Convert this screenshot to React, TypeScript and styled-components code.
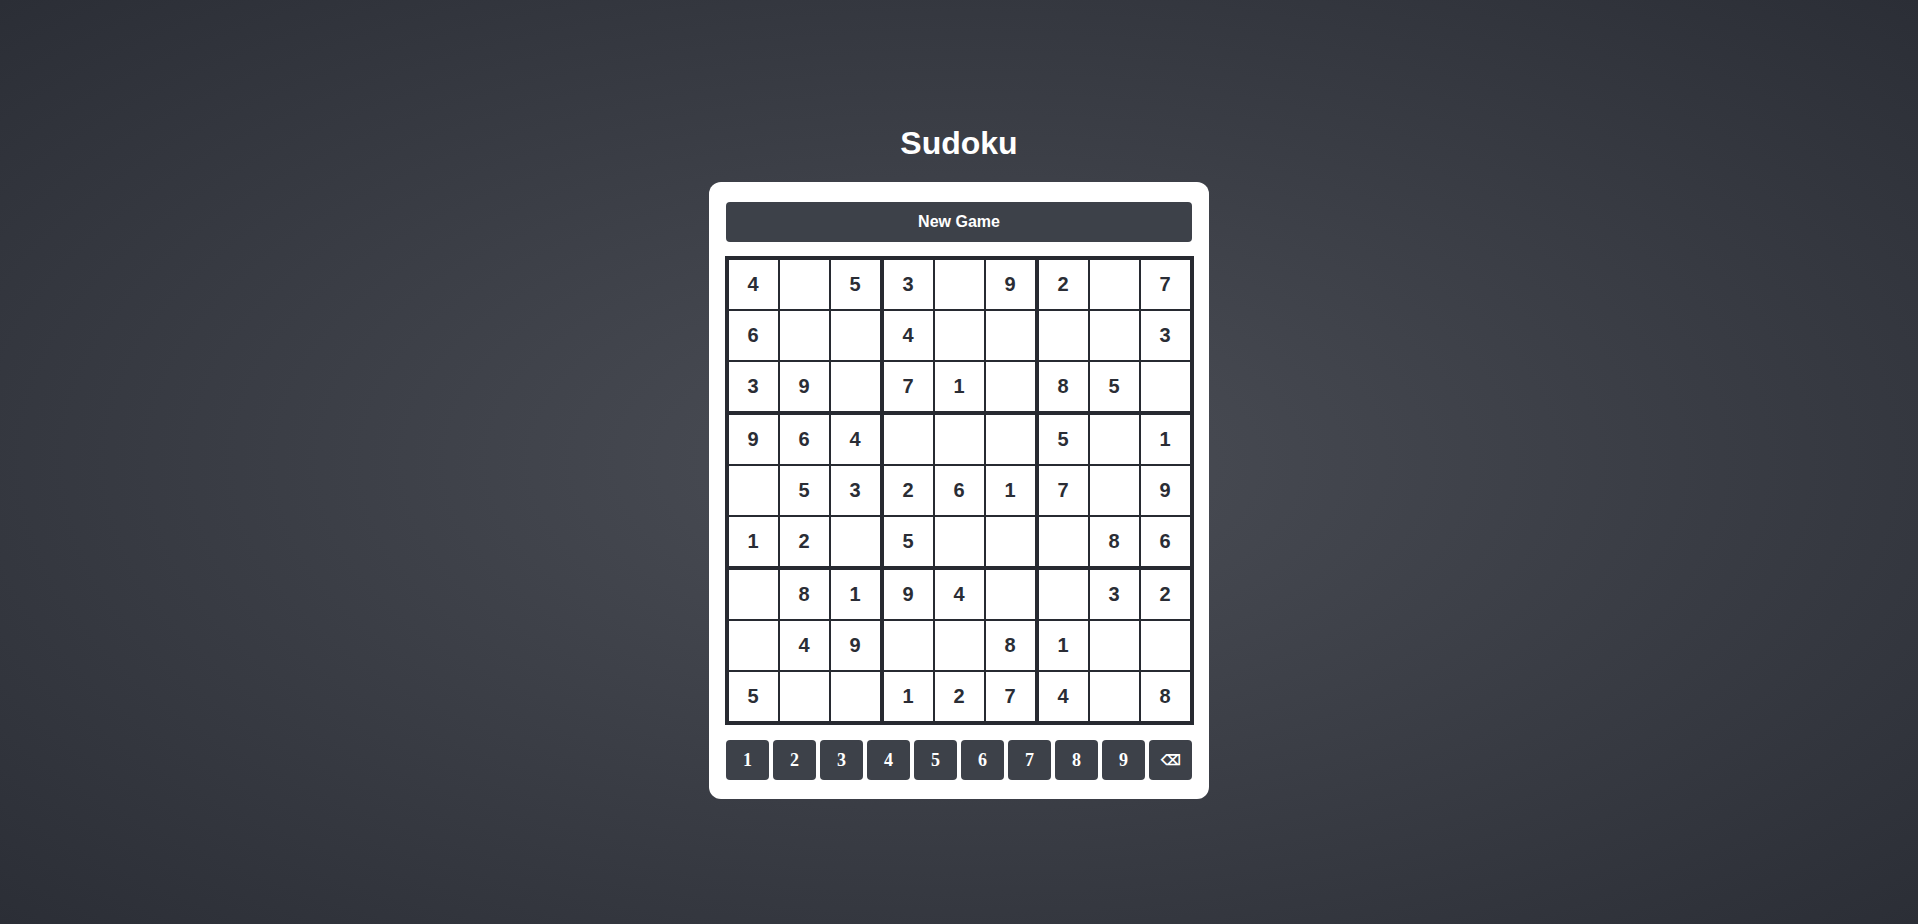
import React from "react";
import styled, { createGlobalStyle } from "styled-components";

const GlobalStyle = createGlobalStyle`
  html, body { margin: 0; padding: 0; }
  body {
    min-height: 100vh;
    background: radial-gradient(ellipse at center, #4b4e56 0%, #2b2e36 100%);
    background-attachment: fixed;
  }
`;

const Page = styled.div`
  min-height: 100vh;
  display: flex;
  flex-direction: column;
  align-items: center;
  justify-content: center;
`;

const Title = styled.h1`
  margin: 0 0 20px;
  font-family: "Liberation Sans", Arial, sans-serif;
  font-size: 32px;
  font-weight: 700;
  color: #ffffff;
`;

const Card = styled.div`
  width: 500px;
  box-sizing: border-box;
  padding: 20px 15px 19px;
  background: #ffffff;
  border-radius: 12px;
  display: flex;
  flex-direction: column;
  align-items: center;
`;

const NewGameButton = styled.button`
  width: 466px;
  height: 40px;
  border: none;
  border-radius: 4px;
  background: #3d4149;
  color: #ffffff;
  font-family: "Liberation Sans", Arial, sans-serif;
  font-size: 16px;
  font-weight: 700;
  margin-bottom: 14px;
  cursor: pointer;
`;

const tracks = "51px 51px 53px 51px 51px 53px 51px 51px 51px";

const Board = styled.div`
  display: grid;
  grid-template-columns: ${tracks};
  grid-template-rows: ${tracks};
  border: 3px solid #272a31;
`;

const Cell = styled.div<{ $thickRight: boolean; $thickBottom: boolean }>`
  border: 1px solid #272a31;
  border-right-width: ${(p) => (p.$thickRight ? "3px" : "1px")};
  border-bottom-width: ${(p) => (p.$thickBottom ? "3px" : "1px")};
  display: flex;
  align-items: center;
  justify-content: center;
  font-family: "Liberation Sans", Arial, sans-serif;
  font-size: 20px;
  font-weight: 700;
  color: #2a2d35;
  background: #ffffff;
`;

const NumPad = styled.div`
  display: grid;
  grid-template-columns: repeat(10, 43px);
  gap: 4px;
  margin-top: 15px;
`;

const PadButton = styled.button<{ $small?: boolean }>`
  height: 40px;
  border: none;
  border-radius: 4px;
  background: #3d4149;
  color: #ffffff;
  font-family: "Liberation Serif", "Times New Roman", serif;
  font-size: ${(p) => (p.$small ? "14px" : "18px")};
  font-weight: 700;
  padding: 0;
  cursor: pointer;
`;

const puzzle = [
  "4.53.92.7",
  "6..4....3",
  "39.71.85.",
  "964...5.1",
  ".532617.9",
  "12.5...86",
  ".8194..32",
  ".49..81..",
  "5..1274.8",
];

export default function App() {
  return (
    <>
      <GlobalStyle />
      <Page>
        <Title>Sudoku</Title>
        <Card>
          <NewGameButton>New Game</NewGameButton>
          <Board>
            {puzzle.map((row, r) =>
              row.split("").map((ch, c) => (
                <Cell
                  key={`${r}-${c}`}
                  $thickRight={c === 2 || c === 5}
                  $thickBottom={r === 2 || r === 5}
                >
                  {ch === "." ? "" : ch}
                </Cell>
              ))
            )}
          </Board>
          <NumPad>
            {["1", "2", "3", "4", "5", "6", "7", "8", "9", "⌫"].map((k) => (
              <PadButton key={k} $small={k === "⌫"}>
                {k}
              </PadButton>
            ))}
          </NumPad>
        </Card>
      </Page>
    </>
  );
}
